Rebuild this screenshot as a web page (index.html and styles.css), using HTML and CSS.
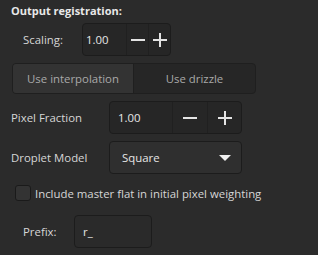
FILE: index.html
```html
<!DOCTYPE html>
<html>
<head>
    <meta charset="UTF-8">
    <title>Output registration</title>
    <link rel="stylesheet" href="styles.css">
</head>
<body>
<div class="panel">
    <div class="title">Output registration:</div>

    <div class="row rowScale">
        <span class="lbl lblScale">Scaling:</span>
        <div class="spin spinScale">
            <span class="val">1.00</span>
            <span class="btn minus"><i></i></span>
            <span class="btn plus"><i></i><b></b></span>
        </div>
    </div>

    <div class="seg">
        <span class="on">Use interpolation</span>
        <span>Use drizzle</span>
    </div>

    <div class="row">
        <span class="lbl lblWide">Pixel Fraction</span>
        <div class="spin spinFrac">
            <span class="val">1.00</span>
            <span class="btn minus"><i></i></span>
            <span class="btn plus"><i></i><b></b></span>
        </div>
    </div>

    <div class="row">
        <span class="lbl lblWide">Droplet Model</span>
        <div class="combo">
            <span>Square</span>
            <em class="arrow"></em>
        </div>
    </div>

    <label class="check">
        <span class="box"></span>
        <span>Include master flat in initial pixel weighting</span>
    </label>

    <div class="row rowPrefix">
        <span class="lbl lblPrefix">Prefix:</span>
        <div class="edit">r_</div>
    </div>
</div>
</body>
</html>
```

FILE: styles.css
```css
* {
    margin: 0;
    padding: 0;
    box-sizing: border-box;
}

body {
    background: #2b2b2b;
    font-family: "Open Sans", "Noto Sans", sans-serif;
    font-size: 11.4px;
    color: #d6d6d6;
}

.panel {
    display: flex;
    flex-direction: column;
    width: 318px;
    height: 255px;
    padding-top: 2px;
}

.title {
    padding-left: 11px;
    height: 18px;
    line-height: 18px;
    font-size: 11px;
    font-weight: bold;
    color: #e8e8e8;
}

.row {
    display: flex;
    align-items: center;
    height: 33px;
    margin-bottom: 7px;
    padding-left: 11px;
}

.rowScale {
    margin-top: 3px;
    padding-left: 23px;
}

.lbl {
    flex: none;
}

.lblScale {
    width: 59px;
}

.lblWide {
    width: 98px;
}

.lblPrefix {
    width: 51px;
}

/* spinbox */
.spin {
    display: flex;
    height: 33px;
    background: #262626;
    border: 1px solid #1c1c1c;
    border-radius: 4px;
}

.spin .val {
    display: flex;
    align-items: center;
    padding-left: 3px;
    color: #e6e6e6;
    border-right: 1px solid #202020;
}

.spin .btn {
    position: relative;
    display: block;
}

.spin .minus {
    border-right: 1px solid #202020;
}

.spin .btn i {
    position: absolute;
    left: 50%;
    top: 50%;
    width: 14px;
    height: 2px;
    margin: -1px 0 0 -7px;
    background: #e4e4e4;
}

.spin .btn b {
    position: absolute;
    left: 50%;
    top: 50%;
    width: 2px;
    height: 14px;
    margin: -7px 0 0 -1px;
    background: #e4e4e4;
}

.spinScale .val { width: 44px; }
.spinScale .minus { width: 22px; }
.spinScale .plus { width: 21px; }

.spinFrac { width: 133px; }
.spinFrac .val { width: 63px; padding-left: 8px; }
.spinFrac .minus { width: 35px; }
.spinFrac .plus { width: 33px; }

/* segmented buttons */
.seg {
    display: flex;
    width: 244px;
    height: 33px;
    margin-left: 12px;
    margin-bottom: 7px;
    border: 1px solid #1f1f1f;
    border-radius: 4px;
    overflow: hidden;
    background: #262626;
    color: #a9a9a9;
}

.seg span {
    display: flex;
    align-items: center;
    justify-content: center;
    width: 122px;
}

.seg span.on {
    background: #333333;
    border-right: 1px solid #1f1f1f;
}

/* combo */
.combo {
    display: flex;
    align-items: center;
    justify-content: space-between;
    width: 133px;
    height: 33px;
    padding: 0 10px 0 12px;
    background: #2f2f2f;
    border: 1px solid #1c1c1c;
    border-radius: 4px;
    color: #e6e6e6;
}

.arrow {
    width: 0;
    height: 0;
    border-left: 6px solid transparent;
    border-right: 6px solid transparent;
    border-top: 6px solid #f0f0f0;
}

/* checkbox */
.check {
    display: flex;
    align-items: center;
    height: 16px;
    margin: 4px 0 14px 15px;
}

.check .box {
    width: 16px;
    height: 16px;
    margin-right: 4px;
    background: #333333;
    border: 1px solid #1a1a1a;
    border-radius: 3px;
}

.rowPrefix {
    padding-left: 23px;
}

.edit {
    display: flex;
    align-items: center;
    width: 78px;
    height: 33px;
    padding-left: 8px;
    background: #2a2a2a;
    border: 1px solid #1c1c1c;
    border-radius: 4px;
    color: #e6e6e6;
}
```
